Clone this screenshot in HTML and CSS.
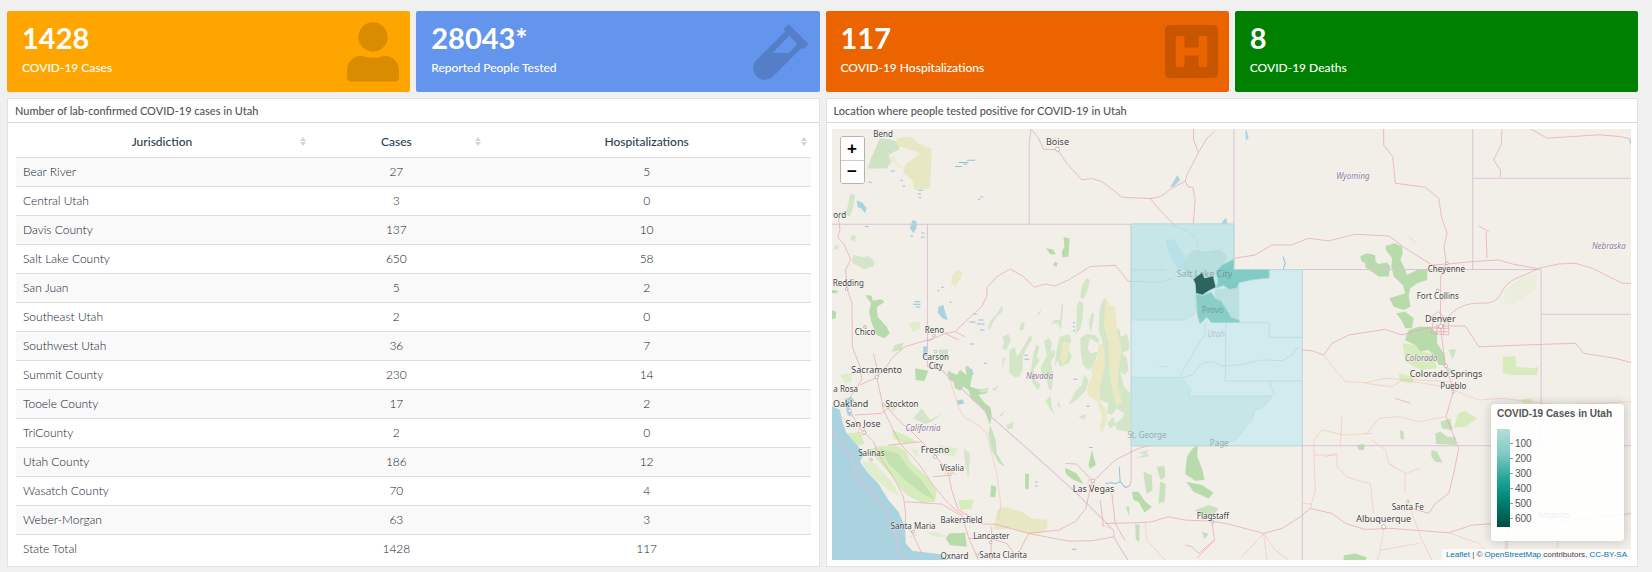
FILE: index.html
```html
<!DOCTYPE html>
<html lang="en">
<head>
    <meta charset="UTF-8">
    <meta name="viewport" content="width=device-width, initial-scale=1.0">
    <title>COVID-19 in Utah</title>
    <link rel="stylesheet" href="styles.css">
</head>
<body>
    <div class="dashboard">
        <div class="value-box cases">
            <div>
                <div class="value">1428</div>
                <div class="caption">COVID-19 Cases</div>
            </div>
            <svg class="box-icon" width="52" height="60" viewBox="0 0 156 180" aria-hidden="true">
                <circle cx="78" cy="45" r="44"/>
                <path d="M38 102C50 100 54 107 78 107S106 100 118 102C142 104 156 124 156 146V166Q156 179 143 179H13Q0 179 0 166V146C0 124 14 104 38 102Z"/>
            </svg>
        </div>
        <div class="value-box tested">
            <div>
                <div class="value">28043*</div>
                <div class="caption">Reported People Tested</div>
            </div>
            <svg class="box-icon" width="56" height="56" viewBox="0 0 168 168" aria-hidden="true">
                <path fill-rule="evenodd" d="M106 0L167 60L152 76L146 71L61 157C47 171 24 171 11 157C-3 143 -3 121 11 107L97 22L91 16ZM109 35L59 86H108L133 60Z"/>
            </svg>
        </div>
        <div class="value-box hospital">
            <div>
                <div class="value">117</div>
                <div class="caption">COVID-19 Hospitalizations</div>
            </div>
            <svg class="box-icon" width="53" height="53" viewBox="0 0 158 158" aria-hidden="true">
                <path fill-rule="evenodd" d="M16 0H142Q158 0 158 16V142Q158 158 142 158H16Q0 158 0 142V16Q0 0 16 0ZM38 33Q32 33 32 39V119Q32 125 38 125H52Q58 125 58 119V91H100V119Q100 125 106 125H120Q126 125 126 119V39Q126 33 120 33H106Q100 33 100 39V67H58V39Q58 33 52 33Z"/>
            </svg>
        </div>
        <div class="value-box deaths">
            <div>
                <div class="value">8</div>
                <div class="caption">COVID-19 Deaths</div>
            </div>
        </div>

        <div class="panel">
            <h2>Number of lab-confirmed COVID-19 cases in Utah</h2>
            <div class="table-wrap">
                <table>
                    <thead>
                        <tr>
                            <th class="jurisdiction">Jurisdiction</th>
                            <th class="count">Cases</th>
                            <th>Hospitalizations</th>
                        </tr>
                    </thead>
                    <tbody>
                        <tr><td>Bear River</td><td>27</td><td>5</td></tr>
                        <tr><td>Central Utah</td><td>3</td><td>0</td></tr>
                        <tr><td>Davis County</td><td>137</td><td>10</td></tr>
                        <tr><td>Salt Lake County</td><td>650</td><td>58</td></tr>
                        <tr><td>San Juan</td><td>5</td><td>2</td></tr>
                        <tr><td>Southeast Utah</td><td>2</td><td>0</td></tr>
                        <tr><td>Southwest Utah</td><td>36</td><td>7</td></tr>
                        <tr><td>Summit County</td><td>230</td><td>14</td></tr>
                        <tr><td>Tooele County</td><td>17</td><td>2</td></tr>
                        <tr><td>TriCounty</td><td>2</td><td>0</td></tr>
                        <tr><td>Utah County</td><td>186</td><td>12</td></tr>
                        <tr><td>Wasatch County</td><td>70</td><td>4</td></tr>
                        <tr><td>Weber-Morgan</td><td>63</td><td>3</td></tr>
                        <tr><td>State Total</td><td>1428</td><td>117</td></tr>
                    </tbody>
                </table>
            </div>
        </div>

        <div class="panel">
            <h2>Location where people tested positive for COVID-19 in Utah</h2>
            <div class="map">
                <svg class="map-canvas" viewBox="21 27 2397 1293" preserveAspectRatio="xMidYMid slice">
                    <!-- parks and forests -->
                    <g class="forest">
                        <path d="M165 55L195 58L225 70L222 88L190 105L200 125L185 146L127 146L140 110Z" opacity=".6"/>
                        <path d="M75 222L90 225L85 260L75 290L62 285L70 250Z" opacity=".5"/>
                        <path d="M85 405L115 412L130 408L148 425L145 440L118 448L80 428Z" opacity=".5"/>
                        <path d="M30 375l12 3-4 10-10 0zM80 345l14 4-6 16-12-6z" opacity=".5"/>
                        <path d="M120 525L140 527L143 542L170 538L178 546L155 562L158 590L185 620L194 640L178 655L155 645L140 610L132 575L138 550Z"/>
                        <path d="M21 570L34 576L32 595L21 598ZM21 510l20 2-8 8-12 0z"/>
                        <path d="M715 352L733 355L730 410L712 413L710 395L718 380ZM663 385l20 4 10 14-18 0zM688 426l10 2-4 12-10-2z"/>
                        <path d="M270 745L310 752L298 783L272 780Z"/>
                        <path d="M368 752L395 765L405 750L425 765L420 740L430 738L442 762L435 800L460 808L490 805L485 820L460 824L478 848L496 862L500 885L495 915L480 875L460 852L440 840L430 810L415 800L405 812L390 805L385 785L370 778Z"/>
                        <path d="M495 915L512 960L515 1000L540 1040L520 1028L500 990L490 940Z" opacity=".7"/>
                        <path d="M720 1043L755 1060L775 1092L745 1080L722 1062ZM790 1035L800 990L812 1035L795 1045ZM600 1060L612 1062L610 1108L600 1105ZM498 1095L514 1100L510 1132L496 1130Z"/>
                        <path d="M372 1240L420 1238L425 1280L375 1275L362 1255Z"/>
                        <path d="M210 675L235 668L230 690L200 695ZM340 690L370 688L366 720L345 712Z" opacity=".6"/>
                        <path d="M290 865L315 900L350 880L320 905L300 912L265 895Z" opacity=".5"/>
                        <path d="M415 985L435 1000L430 1075L422 1040Z" opacity=".5"/>
                    </g>
                    <g class="meadow">
                        <path d="M150 980L210 975L240 990L260 1030L300 1065L335 1110L330 1145L290 1148L250 1128L225 1105L205 1070L175 1040L150 1010L125 1000Z"/>
                        <path d="M110 1022L150 1030L200 1085L225 1130L190 1110L130 1060Z" opacity=".6"/>
                        <path d="M65 940L105 935L118 970L95 978L68 960Z"/>
                        <path d="M200 930L240 945L275 965L240 970L205 955ZM400 1140L445 1138L440 1165L405 1170Z"/>
                        <path d="M45 765L80 758L80 785L60 790ZM340 975L400 985L385 1010L345 1000Z" opacity=".7"/>
                        <path d="M250 608L285 605L285 628L262 635ZM300 1235L340 1238L370 1250L330 1250Z" opacity=".7"/>
                        <path d="M185 855L215 860L205 878ZM255 985L280 990L275 1010Z" opacity=".6"/>
                    </g>
                    <path class="forest" d="M165 985L220 1000L255 1050L290 1080L330 1140L300 1125L245 1085L215 1055L190 1030Z" opacity=".6"/>
                    <g class="military">
                        <path d="M215 55L260 50L280 70L320 88L315 205L268 210L262 180L235 160L240 135L285 100L215 75Z"/>
                        <path d="M530 1160L555 1165L590 1175L620 1195L668 1200L665 1225L645 1240L600 1238L560 1225L505 1228L515 1175Z"/>
                        <path d="M190 118L205 106L220 130L240 150L210 135Z" opacity=".6"/>
                    </g>
                    <path class="sand" d="M380 470L395 450L412 455L408 475L390 500L378 490Z"/>

                    <!-- Nevada ranges -->
                    <g transform="translate(465 450)">
                        <g class="range">
                            <path d="M22 180L30 152L48 135L62 112L70 110L66 126L48 142L38 158L30 176ZM320 25L330 30L322 62L310 88L300 80L306 45ZM290 110L298 92L310 100L306 150L300 178L286 192L290 150ZM326 160L334 128L342 130L340 150L332 190Z"/>
                            <path d="M244 102L250 105L245 150L242 182L234 160L212 162L222 150L240 150ZM170 135L184 118L180 132ZM118 180L122 160L134 155L130 180Z"/>
                            <path d="M66 200L86 192L92 210L78 242L66 235L72 215ZM66 265L76 262L68 295Z"/>
                            <path d="M150 195L158 205L140 232L128 262L128 295L120 318L105 322L88 308L88 240L104 232L110 262L124 240Z"/>
                            <path d="M168 225L178 228L170 260L178 270L160 300L166 330L182 345L174 360L158 340L150 310L155 285L160 250Z"/>
                            <path d="M192 212L208 204L216 220L210 245L222 240L225 255L212 275L220 320L215 362L205 355L198 320L184 318L182 290L200 258Z"/>
                            <path d="M238 200L268 192L274 215L262 225L275 262L265 280L240 290L232 270L222 290L230 240Z"/>
                            <path d="M300 205L320 192L345 196L360 210L350 218L330 205L322 235L330 250L352 245L345 275L325 300L308 285L302 250Z"/>
                            <path d="M372 85L380 90L395 130L402 165L418 180L422 200L440 192L446 215V240L425 250L440 265L445 300L435 315L420 305L432 350L450 370V485L410 480L404 462L425 445L432 430L410 415L395 435L380 430L385 400L350 385L340 370L355 340L350 300L360 260L368 220L355 180L360 110Z"/>
                            <path d="M265 405L285 365L305 345L312 315L325 330L318 360L290 390ZM196 392L212 378L215 410L224 438L208 415ZM232 390L242 412L234 410Z"/>
                            <path d="M295 440L320 430L312 450ZM380 460L400 440L405 465L392 475ZM0 358L28 355L20 365L0 368ZM35 358L60 345L45 362ZM78 465L100 455L98 475L82 478ZM55 440L74 420L68 435Z"/>
                        </g>
                        <g class="sand">
                            <path d="M375 80L390 108L404 110L412 190L425 235L415 300L412 350L425 395L410 410L395 350L388 300L385 220L372 170Z"/>
                            <path d="M355 215L372 235L375 290L358 350L362 400L378 420L380 450L365 490L358 470L366 440L352 395L322 375L322 350L335 320L332 290L350 270Z"/>
                            <path d="M248 215L268 220L264 255L250 290L240 265Z"/>
                        </g>
                    </g>

                    <!-- ranges south and east of Utah -->
                    <g transform="translate(840 0)">
                        <g class="forest">
                            <path d="M765 408L785 400L810 405L810 450L790 435L768 424Z"/>
                            <path d="M262 985L278 975L276 1010L292 1050L298 1080L270 1082L240 1062L245 1010Z"/>
                            <path d="M243 1085L290 1095L325 1118L310 1135L265 1115Z"/>
                            <path d="M80 1115L100 1115L120 1145L140 1160L118 1178L100 1145L85 1140Z"/>
                            <path d="M115 1055L140 1065L142 1110L125 1122L118 1085ZM155 1040L178 1038L180 1070L165 1080ZM165 1085L182 1092L178 1145L160 1150Z" opacity=".7"/>
                            <path d="M270 1170L310 1155L340 1165L320 1190L280 1185Z" opacity=".7"/>
                            <path d="M90 1212L103 1215L102 1265L92 1258ZM290 1235L310 1240L298 1258ZM62 1160L72 1160L72 1190Z" opacity=".8"/>
                            <path d="M715 1305L750 1300L785 1312L780 1320L715 1320ZM755 975L778 972L776 990L760 988Z"/>
                            <path d="M100 998L130 990L120 1005ZM85 1015L130 1000L128 1010Z" opacity=".5"/>
                        </g>
                    </g>

                    <!-- Rocky Mountains -->
                    <g transform="translate(1620 0)">
                        <g class="forest">
                            <path d="M0 402L20 412L38 432L65 428L75 440L70 470L40 470L0 442Z"/>
                            <path d="M60 378L88 370L110 380L112 400L105 420L118 445L125 465L160 448L186 450L185 480L155 490L135 505L130 525L135 560L115 570L85 560L72 535L120 520L112 495L85 470L78 440L80 415L62 390Z"/>
                            <path d="M92 580L120 575L145 595L140 625L120 625L108 600Z"/>
                            <path d="M118 660L130 630L160 620L195 620L215 640L215 670L235 700L240 735L220 735L205 705L190 690L165 695L150 675Z"/>
                            <path d="M210 940L225 935L245 950L270 952L272 975L212 972ZM225 905L255 895L262 930L230 925Z" opacity=".8"/>
                            <path d="M198 990L215 995L232 1028L210 1025L198 1010ZM105 930L115 935L115 960L105 955Z" opacity=".8"/>
                            <path d="M250 690L272 688L262 720ZM245 740L260 750L250 765Z" opacity=".6"/>
                        </g>
                        <g class="meadow">
                            <path d="M112 670L150 675L165 695L200 700L215 745L165 750L120 725ZM100 760L145 770L140 790L105 785Z"/>
                            <path d="M278 880L300 872L335 895L300 920L265 922Z"/>
                            <path d="M412 710L450 708L452 740L500 745L518 740L515 765L440 765L412 760Z"/>
                            <path d="M468 838L500 835L498 852L470 850Z"/>
                            <path d="M420 510L470 470L515 460L510 510L440 555L415 545Z" opacity=".25"/>
                        </g>
                    </g>

                    <!-- water -->
                    <path class="water" d="M21 858L45 870L52 905L65 940L100 980L118 1000L105 1025L130 1060L160 1090L190 1140L220 1175L240 1220L242 1270L262 1292L345 1302L370 1320H21Z"/>
                    <g class="water">
                        <path d="M58 838L78 830L90 842L72 852L80 890L68 885Z"/>
                        <path d="M95 242L112 248L125 265L120 280L108 265L98 262Z"/>
                        <path d="M262 300L275 305L274 325L265 340L255 325Z"/>
                        <path d="M340 560L355 555L360 575L368 600L352 595L338 578Z"/>
                        <path d="M294 680L308 678L308 708L294 710ZM434 745L442 748L445 765L434 765ZM395 842L412 838L418 850L400 855Z"/>
                        <path d="M1048 180L1056 165L1065 180L1045 200L1035 202ZM1192 305L1203 293L1206 312H1188ZM1260 35L1264 30L1270 55L1262 62Z"/>
                        <path d="M2410 62l8-4v22z"/>
                    </g>
                    <g class="lakes">
                        <path d="M390 140h20M400 128h30M425 121h25M415 132h12M197 153h12M226 181h8M232 199h8M130 187h10M280 211h14M278 222h10M282 233h6M458 238h8M466 231h8M290 339h8M256 348h8M288 352h10"/>
                        <path d="M268 545h18M264 553h22M272 561h14M348 502h8M337 512h6M373 547h6M445 582h10M433 606h18M460 600h16M456 612h22M464 630h14M743 608h7M743 620h7M743 632h7M435 672h12M477 730h8M598 718h14M745 778h12M784 859h10M792 982h10M630 1086h8M630 1098h8M598 706h10M740 1287h14M120 320h10"/>
                        <path d="M840 1090L860 1088L872 1090L885 1085L882 1040M885 1085L900 1102L912 1098M1373 410L1380 430L1374 448"/>
                    </g>

                    <!-- state lines -->
                    <g class="border">
                        <path d="M21 313H1226M307 313V740L350 750L500 892L600 980L750 1115L865 1230L868 1255L908 1320M612 313V70L618 27M1226 27V449H2147M1942 27V449M1942 175H2418M2147 449V976M2147 583H2418M918 313V1080Q915 1105 900 1100M918 977H2418M1431 449V1320M2045 977V1320"/>
                        <path d="M21 920L40 965L78 1005L95 1070L150 1130L190 1190L215 1250L220 1295L245 1320"/>
                    </g>

                    <!-- highways -->
                    <g class="roads">
                        <path d="M618 27L640 55L655 88L697 90L725 130L770 180L800 176L830 185L870 215L890 232L975 236C1020 232 1025 212 1045 202L1080 184L1085 165L1120 98L1145 55L1170 33M1105 27V60L1120 100M975 236L1012 280L1045 312M1080 184L1088 200L1103 203L1110 240L1104 312"/>
                        <path d="M40 290L45 330L38 350L58 375L77 418L62 450L66 505L81 550L82 680L105 740L110 780L90 810L70 840"/>
                        <path d="M307 665L360 640L390 635L445 582L470 560L485 530L486 503L515 470L555 447L595 470L628 502L660 492L690 498L730 480L795 440L870 436L910 485L960 484"/>
                        <path d="M390 635L420 650M360 640L400 660M325 655L240 680L205 710L180 745L155 772L105 795M155 772L170 840L175 870L200 920L225 970L280 1030L320 1090L370 1150L410 1185L430 1250L460 1320"/>
                        <path d="M75 870L100 920L145 965L165 1010L210 1080L235 1130L242 1180L240 1210L265 1245L290 1300M180 855L220 900L265 940L330 1005L370 1060L380 1110L400 1170L475 1212H510L610 1240L700 1230L750 1205L782 1165L795 1105L803 1085L870 1020L900 1005L940 985L970 977M145 700L155 740L160 770M90 885L170 880L200 855M190 975L290 965M240 1145L350 1152L400 1182M430 1255H495L545 1270L575 1310L610 1240M500 1220L497 1320M325 1070L380 1065M610 1240L730 1263L800 1262L865 1250"/>
                        <path d="M840 1210L940 1208L980 1205L1030 1190L1080 1200L1160 1203L1210 1212L1315 1240L1370 1225L1425 1190L1455 1165L1520 1180L1560 1210L1620 1228L1700 1225L1870 1238L1940 1215L2010 1210L2200 1205L2418 1180"/>
                        <path d="M720 1030L755 1032L790 1070L803 1085M825 1140L835 1220M860 1120L870 1210L900 1262M1160 1203L1168 1260L1115 1315M1168 1260L1120 1300L1100 1280L1080 1275"/>
                        <path d="M1226 415L1290 405L1340 375H1400L1450 355L1510 363L1590 343L1690 348L1740 385L1820 435L1870 432L1940 425L2020 420L2060 432L2135 446L2200 432L2250 430L2300 445L2390 490H2418"/>
                        <path d="M1675 27V75L1702 110L1710 190L1800 202L1840 235L1848 290L1865 340L1856 380L1862 430L1846 470L1845 620L1860 735L1885 810L1862 890L1900 985L1885 1060L1870 1120L1830 1150L1810 1180L1760 1165"/>
                        <path d="M2030 27L2027 75L2005 120L2025 150V172M2115 27L2165 55L2240 50L2320 45L2385 50L2418 58M1960 318L1990 335M1982 335L1985 415"/>
                        <path d="M2135 448C2080 475 2050 475 2030 515S1990 548 1950 550S1870 575 1860 610L1845 620M1848 618H1920L1960 680L1970 680L2120 674L2250 670L2275 700L2370 715L2418 728"/>
                        <path d="M1431 690L1460 692L1495 705L1520 670L1570 645L1680 628L1730 645L1800 625L1845 620M1824 600L1818 640L1870 645V610L1840 575L1818 590ZM1824 625H1870M1825 635H1868M1835 612V645M1855 612V645M1710 835L1755 850"/>
                    </g>
                    <g class="roads minor">
                        <path d="M375 780L400 860L415 890L460 915L485 940L515 1060L527 1150L520 1200M1495 705L1530 750L1560 785L1620 788L1680 775L1870 785M1466 1005V960L1490 930L1555 945L1640 940M1466 1005H1535V1040L1565 1070L1610 1085L1635 1090L1645 1180M1466 1005L1470 1110L1455 1165M1550 890L1545 975M1431 1150L1460 1152M1500 1010L1535 1000"/>
                        <path d="M1620 945L1660 895L1720 890L1780 905L1860 890M1640 960L1680 990L1690 1030L1740 1060L1738 1120M1740 1060L1785 1045M1745 1140L1790 1260L1820 1320M1315 1240L1250 1310M1315 1240L1350 1290L1390 1320M1315 1240L1325 1320M1620 790L1700 800L1730 780L1860 800L1960 840L2030 835L2200 855L2418 845M1870 1238L1960 1270L2010 1320M1675 1225L1665 1290L1655 1320M960 1208L965 1260L1020 1320M2040 1250V1320M2200 1250L2190 1320M1665 1290L1780 1270M1710 1045L1690 1030"/>
                        <path d="M375 1050l3 20m-20-10h30m-15-8l20 12M400 1182h30m-20-10v25M100 930l15-8 10 18-20 8zM50 890l12 12M790 1078l20 8-8 12-14-6zM255 1250l20-6M825 1212l30 12M1750 350L1772 370"/>
                    </g>

                    <!-- labels and town markers -->
                    <g class="towns">
                        <circle cx="697" cy="88" r="6"/><circle cx="65" cy="507" r="4"/><circle cx="120" cy="621" r="4"/><circle cx="327" cy="647" r="4"/><circle cx="331" cy="695" r="4"/><circle cx="155" cy="771" r="5"/><circle cx="176" cy="854" r="4"/><circle cx="74" cy="872" r="5"/><circle cx="117" cy="937" r="5"/><circle cx="330" cy="1010" r="5"/><circle cx="138" cy="1019" r="4"/><circle cx="264" cy="1235" r="4"/><circle cx="497" cy="1267" r="4"/><circle cx="457" cy="1305" r="4"/><circle cx="803" cy="1082" r="5"/><circle cx="1163" cy="1205" r="4"/><circle cx="1865" cy="430" r="4"/><circle cx="1837" cy="511" r="4"/><circle cx="1846" cy="619" r="6"/><circle cx="1861" cy="738" r="5"/><circle cx="1883" cy="815" r="4"/><circle cx="1747" cy="1144" r="4"/><circle cx="1675" cy="1220" r="6"/>
                    </g>
                    <g class="city">
                        <text x="697" y="76">Boise</text>
                        <text x="155" y="760">Sacramento</text>
                        <text x="77" y="861">Oakland</text>
                        <text x="114" y="922">San Jose</text>
                        <text x="330" y="998">Fresno</text>
                        <text x="805" y="1115">Las Vegas</text>
                        <text x="1845" y="607">Denver</text>
                        <text x="1862" y="770">Colorado Springs</text>
                        <text x="1675" y="1207">Albuquerque</text>
                    </g>
                    <g class="town">
                        <text x="174" y="51">Bend</text>
                        <text x="44" y="294">ord</text>
                        <text x="70" y="497">Redding</text>
                        <text x="120" y="646">Chico</text>
                        <text x="328" y="638">Reno</text>
                        <text x="332" y="721">Carson</text>
                        <text x="332" y="748">City</text>
                        <text x="62" y="816">a Rosa</text>
                        <text x="231" y="862">Stockton</text>
                        <text x="139" y="1009">Salinas</text>
                        <text x="381" y="1053">Visalia</text>
                        <text x="409" y="1209">Bakersfield</text>
                        <text x="264" y="1227">Santa Maria</text>
                        <text x="499" y="1258">Lancaster</text>
                        <text x="388" y="1318">Oxnard</text>
                        <text x="534" y="1313">Santa Clarita</text>
                        <text x="1163" y="1196">Flagstaff</text>
                        <text x="1863" y="457">Cheyenne</text>
                        <text x="1837" y="537">Fort Collins</text>
                        <text x="1884" y="806">Pueblo</text>
                        <text x="1747" y="1170">Santa Fe</text>
                        <text x="2184" y="1194">Amarillo</text>
                    </g>
                    <g class="state">
                        <text x="643" y="778">Nevada</text>
                        <text x="294" y="933">California</text>
                        <text x="1583" y="178">Wyoming</text>
                        <text x="2350" y="388">Nebraska</text>
                        <text x="1788" y="723">Colorado</text>
                    </g>

                    <!-- health districts -->
                    <g transform="translate(840 0)">
                        <path class="district d1" d="M78 312H386V449H591V977H78Z"/>
                        <path class="district d2" d="M78 312H386V417L332 450L340 485L330 505L270 520V580L240 600H78Z"/>
                        <path class="lake-shade" d="M182 360L208 358L222 385L238 405L245 450L220 450L190 400Z"/>
                        <path class="district d3" d="M245 410L268 390L300 397L345 390L365 410L352 435L332 450L328 470L305 470L290 458L265 480L240 460L238 430Z"/>
                        <path class="district d3" d="M330 510L370 505L400 490V600L375 590L345 545L330 530Z"/>
                        <path class="district d2" d="M78 772H225L258 808L250 828H500L475 862L450 870L440 900L415 930L390 958L350 977H78Z"/>
                        <path class="district summit" d="M386 417V449H492V474L440 480L402 488L395 504L372 508L355 497L332 505L338 485L332 455L350 435Z"/>
                        <path class="district utah" d="M272 522L292 526L318 516L330 535L348 543L365 570L378 592L403 600V608H318L305 592L284 612L276 585L274 560Z"/>
                        <path class="district salt" d="M264 478L290 458L298 474L324 468L332 502L310 513L292 525L272 520L270 492Z"/>
                        <path class="county-line" d="M78 449H180M70 484L165 487L205 475M362 608L360 783H591M403 608H492V652H591M300 610V640L225 765L230 772M230 773L260 765L290 730L320 725L355 738L400 735L470 720L530 722L560 705L580 680M492 784L505 822M160 740H185M200 315L250 335L275 360L288 430"/>
                    </g>
                    <g class="city covered">
                        <text x="1138" y="470">Salt Lake City</text>
                    </g>
                    <g class="town covered">
                        <text x="1163" y="578">Provo</text>
                        <text x="965" y="955">St. George</text>
                        <text x="1182" y="979">Page</text>
                    </g>
                    <g class="state covered">
                        <text x="1173" y="650">Utah</text>
                    </g>
                </svg>
                <div class="zoom-control">
                    <button type="button" aria-label="Zoom in">+</button>
                    <button type="button" aria-label="Zoom out">−</button>
                </div>
                <div class="legend">
                    <strong>COVID-19 Cases in Utah</strong>
                    <div class="scale">
                        <div class="gradient"></div>
                        <ul>
                            <li>100</li>
                            <li>200</li>
                            <li>300</li>
                            <li>400</li>
                            <li>500</li>
                            <li>600</li>
                        </ul>
                    </div>
                </div>
                <div class="attribution">
                    <a href="#">Leaflet</a> | © <a href="#">OpenStreetMap</a> contributors, <a href="#">CC-BY-SA</a>
                </div>
            </div>
        </div>
    </div>
</body>
</html>
```
FILE: styles.css
```css
* {
    box-sizing: border-box;
}
body {
    font-family: Lato, sans-serif;
    margin: 0;
    background-color: #f0f0f0;
    color: #2c3e50;
}
.dashboard {
    display: grid;
    grid-template-columns: repeat(4, 1fr);
    gap: 6px;
    padding: 11px 14px 5px 7px;
}
.value-box {
    display: flex;
    justify-content: space-between;
    align-items: center;
    height: 81px;
    padding: 0 11px 0 15px;
    border-radius: 2px;
    color: white;
}
.cases {
    background-color: #ffa500;
}
.tested {
    background-color: #6495ed;
}
.hospital {
    background-color: #eb6400;
}
.deaths {
    background-color: #008000;
}
.value {
    font-size: 29px;
    line-height: 32px;
    font-weight: bold;
}
.caption {
    margin: 5px 0 4px;
    font-size: 12px;
    line-height: 18px;
    font-weight: 500;
}
.box-icon {
    fill: rgba(0, 0, 0, 0.15);
}
.panel {
    grid-column: span 2;
    display: flex;
    flex-direction: column;
    background-color: white;
    border: 1px solid #e2e2e2;
}
.panel h2 {
    margin: 0;
    padding: 0 7px;
    font-size: 11px;
    line-height: 23px;
    font-weight: 500;
    color: #555;
    border-bottom: 1px solid #d8d8d8;
}
.table-wrap {
    padding: 4px 8px 3px;
}
table {
    width: 100%;
    border-collapse: collapse;
    table-layout: fixed;
    font-size: 12px;
}
th {
    position: relative;
    height: 30px;
    padding: 0 2px 0 0;
    font-weight: 500;
}
.jurisdiction {
    width: 37%;
}
.count {
    width: 22%;
}
th::before, th::after {
    content: "";
    position: absolute;
    right: 4px;
    border: 3px solid transparent;
}
th::before {
    top: 7px;
    border-bottom: 4px solid #d4d4d4;
}
th::after {
    top: 15px;
    border-top: 4px solid #d4d4d4;
}
td {
    height: 29px;
    padding: 0 9px 0 7px;
    border-top: 1px solid #ddd;
    color: #14222f;
    font-weight: 300;
    text-align: center;
}
td:first-child {
    text-align: left;
}
tbody tr:nth-child(odd) {
    background-color: #f9f9f9;
}
.map {
    position: relative;
    flex: 1;
    min-height: 431px;
    margin: 6px 6px 6px 5px;
    overflow: hidden;
    background-color: #f2efe9;
    font-family: "Liberation Sans", Arial, sans-serif;
}
.map-canvas {
    position: absolute;
    width: 100%;
    height: 100%;
    fill: none;
}
.forest {
    fill: #b8dbac;
}
.meadow {
    fill: #d6ecbc;
}
.military {
    fill: #e7e7c4;
}
.range {
    fill: #d3e6c8;
}
.sand {
    fill: #ebe9c4;
}
.water {
    fill: #aad3df;
}
.lakes {
    stroke: #8fc3dc;
    stroke-width: 3;
}
.border {
    stroke: #dcc2d6;
    stroke-width: 3;
}
.roads {
    stroke: #e8a0ab;
    stroke-width: 2;
    stroke-linejoin: round;
}
.minor {
    stroke: #f5c5b4;
}
.towns {
    fill: white;
    stroke: #a99;
    stroke-width: 2;
}
.city, .town, .state {
    font-family: "Noto Sans", sans-serif;
    text-anchor: middle;
    fill: #444;
    paint-order: stroke;
    stroke: rgba(255, 255, 255, 0.6);
    stroke-width: 3;
}
.city {
    font-size: 27px;
}
.town {
    font-size: 24px;
}
.state {
    font-size: 24px;
    font-style: italic;
    fill: #9277a0;
}
.covered {
    opacity: 0.35;
    stroke: none;
}
.district {
    stroke: #b5dde0;
    stroke-width: 2;
}
.d1 {
    fill: rgba(200, 234, 240, 0.8);
}
.d2 {
    fill: rgba(187, 226, 226, 0.5);
}
.d3 {
    fill: rgba(178, 219, 217, 0.7);
}
.lake-shade {
    fill: #b8e0e9;
}
.summit {
    fill: rgba(115, 198, 189, 0.85);
}
.utah {
    fill: rgba(123, 201, 192, 0.85);
}
.salt {
    fill: #2c655f;
}
.county-line {
    stroke: #bdd3dc;
    stroke-width: 2;
}
.zoom-control {
    position: absolute;
    top: 7px;
    left: 8px;
    display: flex;
    flex-direction: column;
    width: 25px;
    border: 1px solid #b5b5b0;
    border-radius: 3px;
    overflow: hidden;
}
.zoom-control button {
    height: 23px;
    padding: 0;
    border: none;
    background-color: white;
    color: black;
    font: bold 17px/22px "Liberation Sans", Arial, sans-serif;
    cursor: pointer;
}
.zoom-control button + button {
    border-top: 1px solid #ccc;
}
.legend {
    position: absolute;
    right: 7px;
    bottom: 19px;
    min-width: 133px;
    padding: 2px 6px 14px;
    border-radius: 4px;
    background-color: rgba(255, 255, 255, 0.9);
    box-shadow: 0 0 11px rgba(0, 0, 0, 0.2);
    color: #555;
    font-size: 10px;
    line-height: 15px;
}
.scale {
    display: flex;
    margin-top: 8px;
}
.gradient {
    width: 13px;
    height: 98px;
    background: linear-gradient(#b2dfdb, #80cbc4 25%, #26a69a 50%, #00897b 70%, #004d40);
}
.scale ul {
    margin: 0;
    padding: 7px 0 0;
    list-style: none;
}
.scale li {
    display: flex;
    align-items: center;
    gap: 2px;
}
.scale li::before {
    content: "";
    width: 3px;
    height: 1px;
    background-color: #999;
}
.attribution {
    position: absolute;
    right: 0;
    bottom: 0;
    padding: 0 4px;
    background-color: rgba(255, 255, 255, 0.7);
    color: #444;
    font-size: 8px;
    line-height: 11px;
}
.attribution a {
    color: #0078a8;
    text-decoration: none;
}
```
